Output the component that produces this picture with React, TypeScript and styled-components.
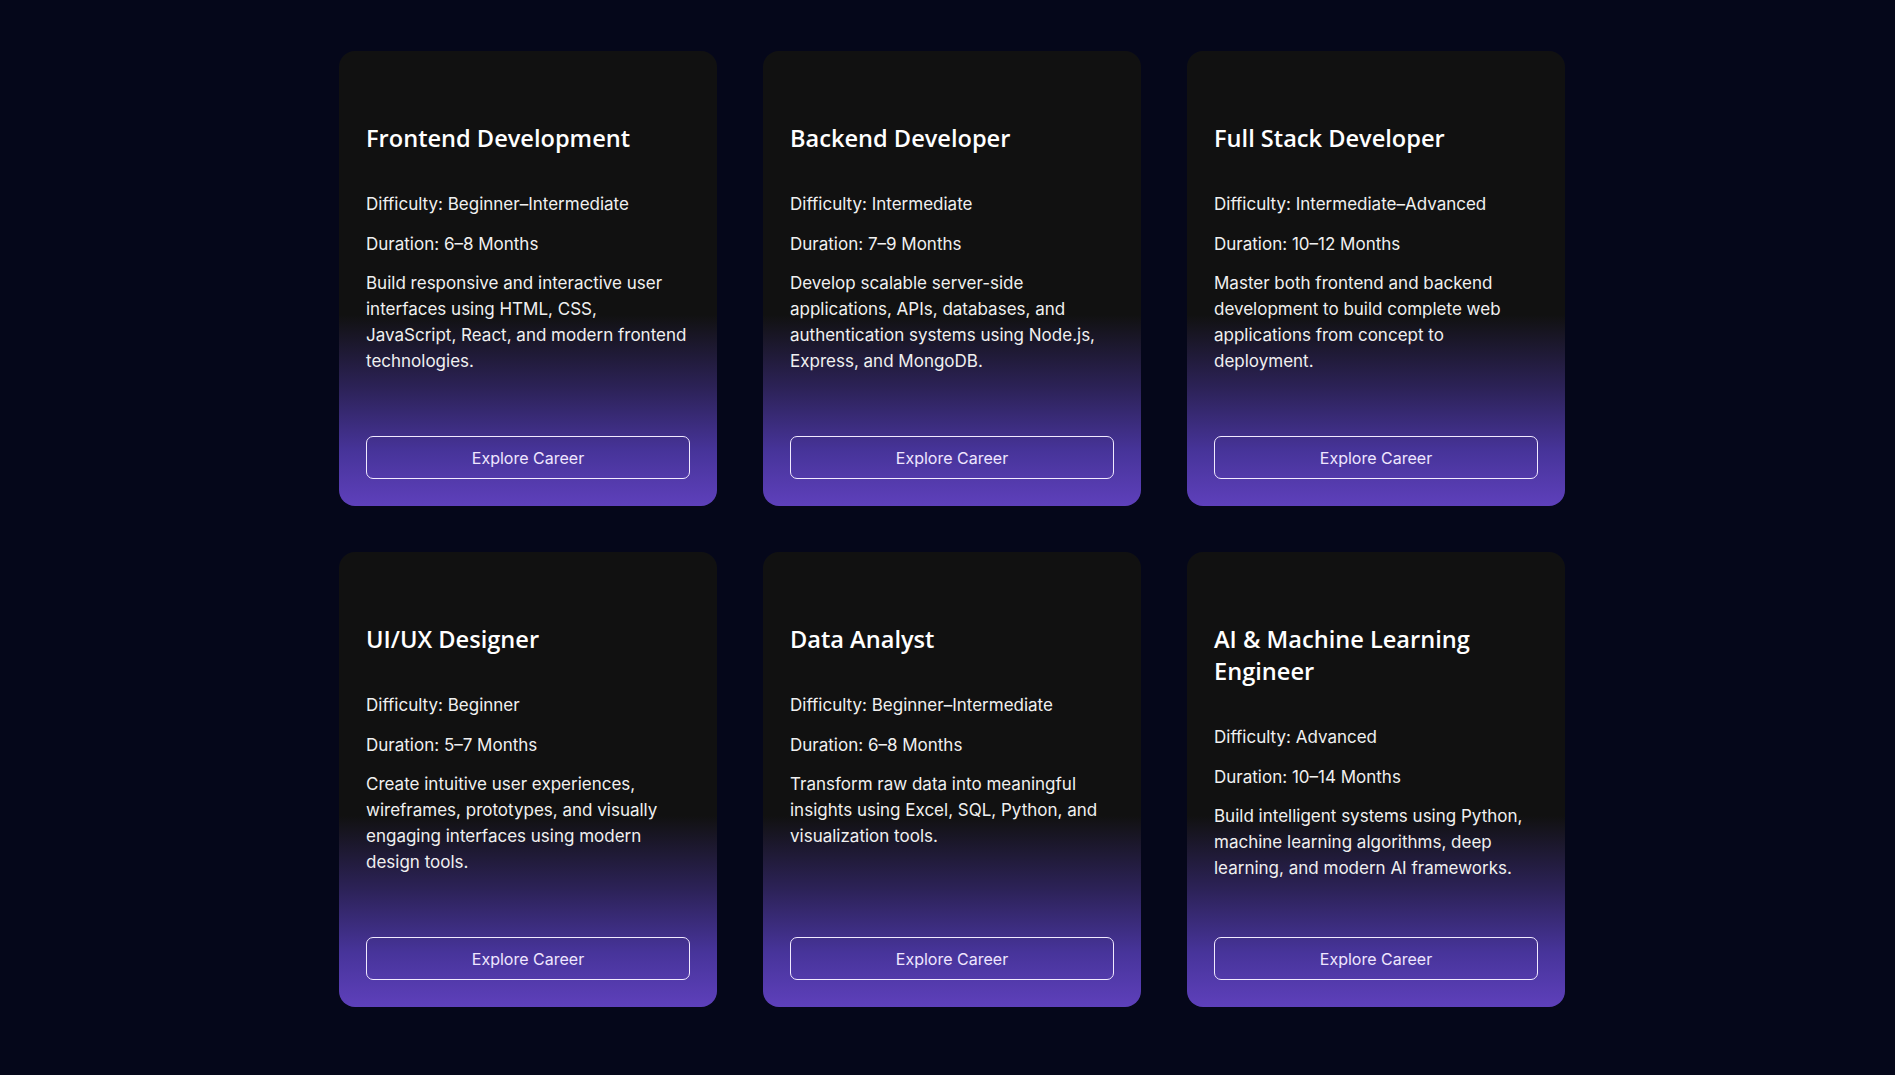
import React from "react";
import styled, { createGlobalStyle } from "styled-components";

const GlobalStyle = createGlobalStyle`
  html, body {
    margin: 0;
    padding: 0;
    background: #05071a;
  }
  body {
    font-family: Inter, "Noto Sans", sans-serif;
    color: #f2f2f2;
  }
`;

const Section = styled.section`
  min-height: 1075px;
  box-sizing: border-box;
  padding: 51px 0 60px;
`;

const Grid = styled.div`
  width: 1235px;
  box-sizing: border-box;
  margin: 0 auto;
  padding-left: 9px;
  display: grid;
  grid-template-columns: repeat(3, 378px);
  column-gap: 46px;
  row-gap: 46px;
`;

const Card = styled.article`
  display: flex;
  flex-direction: column;
  box-sizing: border-box;
  height: 455px;
  padding: 27px;
  border-radius: 16px;
  background: linear-gradient(180deg, #111111 0%, #111111 58%, #2c2257 74%, #47349a 88%, #5e40bb 100%);
`;

const Title = styled.h3`
  margin: 44px 0 0;
  font-family: "Open Sans", Inter, sans-serif;
  font-weight: 600;
  font-size: 23.6px;
  line-height: 32px;
  color: #ffffff;
`;

const Meta = styled.p`
  margin: 38px 0 0;
  font-size: 17px;
  line-height: 25.6px;
  color: #f0f0f0;

  & + & {
    margin-top: 14px;
  }
`;

const Description = styled.p`
  margin: 13px 0 0;
  font-size: 17px;
  line-height: 26px;
  color: #f0f0f0;
`;

const Actions = styled.div`
  margin-top: auto;
`;

const Button = styled.button`
  width: 100%;
  height: 43px;
  box-sizing: border-box;
  border: 1px solid #f1eaff;
  border-radius: 7px;
  background: transparent;
  color: #efe6ff;
  font-family: Inter, sans-serif;
  font-size: 16px;
  cursor: pointer;
`;

type Career = {
  title: string;
  difficulty: string;
  duration: string;
  text: string;
};

const careers: Career[] = [
  {
    title: "Frontend Development",
    difficulty: "Beginner–Intermediate",
    duration: "6–8 Months",
    text: "Build responsive and interactive user interfaces using HTML, CSS, JavaScript, React, and modern frontend technologies.",
  },
  {
    title: "Backend Developer",
    difficulty: "Intermediate",
    duration: "7–9 Months",
    text: "Develop scalable server-side applications, APIs, databases, and authentication systems using Node.js, Express, and MongoDB.",
  },
  {
    title: "Full Stack Developer",
    difficulty: "Intermediate–Advanced",
    duration: "10–12 Months",
    text: "Master both frontend and backend development to build complete web applications from concept to deployment.",
  },
  {
    title: "UI/UX Designer",
    difficulty: "Beginner",
    duration: "5–7 Months",
    text: "Create intuitive user experiences, wireframes, prototypes, and visually engaging interfaces using modern design tools.",
  },
  {
    title: "Data Analyst",
    difficulty: "Beginner–Intermediate",
    duration: "6–8 Months",
    text: "Transform raw data into meaningful insights using Excel, SQL, Python, and visualization tools.",
  },
  {
    title: "AI & Machine Learning Engineer",
    difficulty: "Advanced",
    duration: "10–14 Months",
    text: "Build intelligent systems using Python, machine learning algorithms, deep learning, and modern AI frameworks.",
  },
];

const App = () => {
  return (
    <>
      <GlobalStyle />
      <Section>
        <Grid>
          {careers.map((c) => (
            <Card key={c.title}>
              <Title>{c.title}</Title>
              <Meta>Difficulty: {c.difficulty}</Meta>
              <Meta>Duration: {c.duration}</Meta>
              <Description>{c.text}</Description>
              <Actions>
                <Button>Explore Career</Button>
              </Actions>
            </Card>
          ))}
        </Grid>
      </Section>
    </>
  );
};

export default App;
